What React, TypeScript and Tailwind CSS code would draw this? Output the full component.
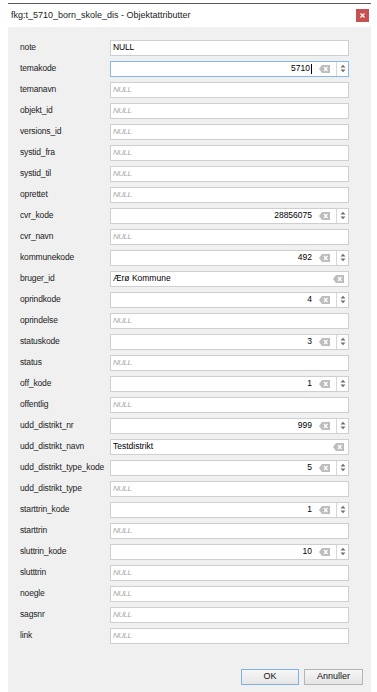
import type { ReactElement } from "react";

type Field = {
	label: string;
	kind: "null" | "text" | "spin" | "textClear";
	value?: string;
	focused?: boolean;
};

const fields: Field[] = [
	{ label: "note", kind: "text", value: "NULL" },
	{ label: "temakode", kind: "spin", value: "5710", focused: true },
	{ label: "temanavn", kind: "null" },
	{ label: "objekt_id", kind: "null" },
	{ label: "versions_id", kind: "null" },
	{ label: "systid_fra", kind: "null" },
	{ label: "systid_til", kind: "null" },
	{ label: "oprettet", kind: "null" },
	{ label: "cvr_kode", kind: "spin", value: "28856075" },
	{ label: "cvr_navn", kind: "null" },
	{ label: "kommunekode", kind: "spin", value: "492" },
	{ label: "bruger_id", kind: "textClear", value: "Ærø Kommune" },
	{ label: "oprindkode", kind: "spin", value: "4" },
	{ label: "oprindelse", kind: "null" },
	{ label: "statuskode", kind: "spin", value: "3" },
	{ label: "status", kind: "null" },
	{ label: "off_kode", kind: "spin", value: "1" },
	{ label: "offentlig", kind: "null" },
	{ label: "udd_distrikt_nr", kind: "spin", value: "999" },
	{ label: "udd_distrikt_navn", kind: "textClear", value: "Testdistrikt" },
	{ label: "udd_distrikt_type_kode", kind: "spin", value: "5" },
	{ label: "udd_distrikt_type", kind: "null" },
	{ label: "starttrin_kode", kind: "spin", value: "1" },
	{ label: "starttrin", kind: "null" },
	{ label: "sluttrin_kode", kind: "spin", value: "10" },
	{ label: "slutttrin", kind: "null" },
	{ label: "noegle", kind: "null" },
	{ label: "sagsnr", kind: "null" },
	{ label: "link", kind: "null" },
];

function ClearIcon(): ReactElement {
	return (
		<svg width="11" height="8" viewBox="0 0 11 8" className="shrink-0">
			<path d="M3 0 H11 V8 H3 L0 4 Z" fill="#bdbdbd" />
			<path d="M5 2 L8.5 6 M8.5 2 L5 6" stroke="#ffffff" strokeWidth="1.2" />
		</svg>
	);
}

function SpinArrows(): ReactElement {
	return (
		<div className="flex h-full w-[12px] items-center justify-center border-l border-[#d6d6d6]">
			<svg width="6" height="9" viewBox="0 0 6 9">
				<path d="M0.5 3.5 L3 0.8 L5.5 3.5 Z" fill="#6f6f6f" />
				<path d="M0.5 5.5 L3 8.2 L5.5 5.5 Z" fill="#6f6f6f" />
			</svg>
		</div>
	);
}

function FieldBox({ field }: { field: Field }): ReactElement {
	const border = field.focused ? "border-[#86b7e8]" : "border-[#cfcfcf]";

	if (field.kind === "spin") {
		return (
			<div className={`flex h-[16px] w-[239px] items-center border bg-white ${border}`}>
				<div className="flex flex-1 items-center justify-end pr-[6px] text-[8.5px] text-black">
					<span>{field.value}</span>
					{field.focused && <span className="ml-[1px] h-[10px] w-px bg-black" />}
					<span className="ml-[7px]">
						<ClearIcon />
					</span>
				</div>
				<SpinArrows />
			</div>
		);
	}

	if (field.kind === "textClear") {
		return (
			<div className={`flex h-[16px] w-[239px] items-center justify-between border bg-white pl-[2px] pr-[4px] ${border}`}>
				<span className="text-[8.5px] text-black">{field.value}</span>
				<ClearIcon />
			</div>
		);
	}

	return (
		<div className={`flex h-[16px] w-[239px] items-center border bg-white pl-[2px] ${border}`}>
			{field.kind === "text" ? (
				<span className="text-[8.5px] tracking-[-0.2px] text-black">{field.value}</span>
			) : (
				<span className="text-[8px] italic tracking-[-0.5px] text-[#a8a8a8]">NULL</span>
			)}
		</div>
	);
}

export default function App(): ReactElement {
	return (
		<div
			className="flex h-[692px] w-[377px] flex-col overflow-hidden bg-white pt-[3px]"
			style={{ fontFamily: '"Liberation Sans", Arial, sans-serif' }}
		>
			<div className="ml-[8px] flex w-[363px] flex-1 flex-col">
				<div className="h-px bg-[#5a5a5a]" />
				<div className="flex h-[23px] items-center justify-between bg-white pl-[3px] pr-[2px]">
					<span className="text-[9px] text-[#222]">fkg:t_5710_born_skole_dis - Objektattributter</span>
					<div className="flex h-[13px] w-[13px] items-center justify-center bg-[#c75050]">
						<svg width="5" height="5" viewBox="0 0 5 5">
							<path d="M0.5 0.5 L4.5 4.5 M4.5 0.5 L0.5 4.5" stroke="#ffffff" strokeWidth="1.2" />
						</svg>
					</div>
				</div>
				<div className="flex flex-1 flex-col bg-[#f0f0f0] pl-[12px] pr-[8px] pt-[10px]">
					<div className="flex flex-col">
						{fields.map((f) => (
							<div key={f.label} className="flex h-[21px] items-center">
								<span className="w-[90px] text-[8.5px] tracking-[-0.15px] text-[#222]">{f.label}</span>
								<FieldBox field={f} />
							</div>
						))}
					</div>
					<div className="mt-[23px] flex justify-end gap-[5px]">
						<button className="h-[16px] w-[58px] border border-[#7fb1e4] bg-gradient-to-b from-[#f6f6f6] to-[#e6e6e6] text-[9px] text-[#111]">
							OK
						</button>
						<button className="h-[16px] w-[59px] border border-[#b5b5b5] bg-gradient-to-b from-[#f6f6f6] to-[#e4e4e4] text-[9px] text-[#111]">
							Annuller
						</button>
					</div>
				</div>
			</div>
		</div>
	);
}
